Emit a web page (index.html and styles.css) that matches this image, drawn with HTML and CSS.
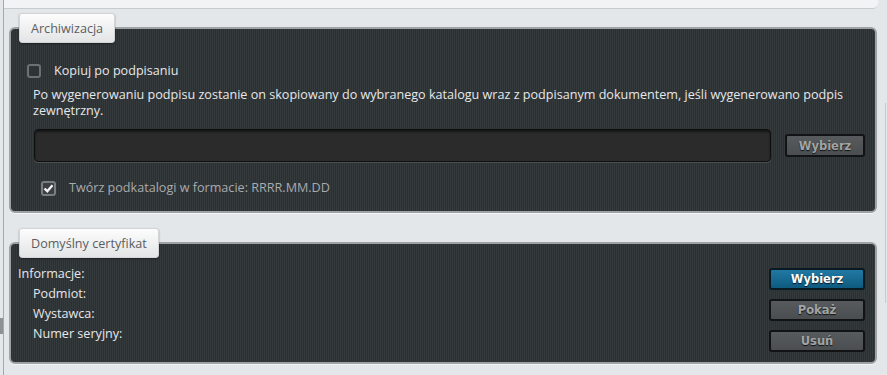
FILE: index.html
```html
<!doctype html>
<html lang="pl">
  <head>
    <meta charset="utf-8" />
    <meta name="viewport" content="width=device-width" />
    <title>Ustawienia podpisu</title>
    <link rel="stylesheet" href="styles.css">
  </head>
  <body>
    <div class="shell">
      <div class="gutter"><span class="grip"></span></div>
      <main class="page">
        <div class="prev"></div>

        <section class="group">
          <div class="tab">Archiwizacja</div>
          <div class="panel panel-archive">
            <label class="check">
              <span class="box"></span>
              Kopiuj po podpisaniu
            </label>
            <p class="note">Po wygenerowaniu podpisu zostanie on skopiowany do wybranego katalogu wraz z podpisanym dokumentem, jeśli wygenerowano podpis zewnętrzny.</p>
            <div class="path-row">
              <div class="field"></div>
              <button class="btn" type="button">Wybierz</button>
            </div>
            <label class="check check-sub">
              <span class="box box-on">
                <svg width="11" height="11" viewBox="0 0 11 11"><path d="M1.5 5.5 L4.3 8.2 L9.5 2.3" fill="none" stroke="#f2f2f2" stroke-width="2.4" /></svg>
              </span>
              Twórz podkatalogi w formacie: RRRR.MM.DD
            </label>
          </div>
        </section>

        <section class="group group-cert">
          <div class="tab">Domyślny certyfikat</div>
          <div class="panel panel-cert">
            <ul class="info">
              <li>Informacje:</li>
              <li class="sub">Podmiot:</li>
              <li class="sub">Wystawca:</li>
              <li class="sub">Numer seryjny:</li>
            </ul>
            <div class="actions">
              <button class="btn btn-primary" type="button">Wybierz</button>
              <button class="btn" type="button">Pokaż</button>
              <button class="btn" type="button">Usuń</button>
            </div>
          </div>
        </section>
      </main>
      <div class="gutter-right"><span class="rail"></span></div>
    </div>
  </body>
</html>
```

FILE: styles.css
```css
*, *::before, *::after {
  box-sizing: border-box;
}

html, body {
  margin: 0;
  padding: 0;
  height: 100%;
}

body {
  background: #e4e7e9;
  font-family: "Open Sans", "Noto Sans", sans-serif;
  font-size: 12.6px;
  color: #e6e8e9;
  overflow: hidden;
}

.shell {
  display: flex;
  height: 375px;
}

.gutter {
  width: 3px;
  display: flex;
  flex-direction: column;
}

.grip {
  display: block;
  height: 16px;
  margin-top: 318px;
  background: #8e9193;
}

.page {
  flex: 1;
  border-left: 1px solid #a6a9ab;
  padding: 0 7px 0 5px;
}

.gutter-right {
  width: 3px;
  display: flex;
  flex-direction: column;
}

.rail {
  display: block;
  width: 1px;
  height: 200px;
  margin: 103px 0 0 1px;
  background: #c9cccd;
}

.prev {
  height: 9px;
  margin: 0 -1px 0 -5px;
  background: #f2f3f4;
  border-bottom: 1px solid #c8cbcd;
  border-radius: 0 0 5px 0;
}

.group {
  margin-top: 4px;
}

.group-cert {
  margin-top: 15px;
}

.tab {
  position: relative;
  z-index: 1;
  width: fit-content;
  height: 30px;
  line-height: 29px;
  margin: 0 0 -16px 10px;
  padding: 0 11px;
  color: #5a5d5f;
  background: linear-gradient(#fdfdfd, #e3e4e5);
  border: 1px solid #d2d4d5;
  border-radius: 3px;
  box-shadow: 0 1px 2px rgba(0, 0, 0, 0.35);
}

.panel {
  border: 2px solid #9ea2a4;
  border-radius: 6px;
  background: repeating-linear-gradient(90deg, #2b3033 0 1px, #34393c 1px 2px);
  box-shadow: 0 1px 0 #f4f5f6;
}

.panel-archive {
  padding: 34px 10px 15px 22px;
}

.check {
  display: flex;
  align-items: center;
  gap: 13px;
  line-height: 16px;
  margin-left: -6px;
}

.box {
  display: flex;
  align-items: center;
  justify-content: center;
  width: 14px;
  height: 14px;
  border: 2px solid #6c7173;
  border-radius: 3px;
  background: #2e3336;
}

.box-on {
  width: 15px;
  height: 15px;
  border-color: #7a7e80;
  background: #3b3f42;
}

.note {
  margin: 8px 0 0;
  line-height: 16px;
}

.path-row {
  display: flex;
  align-items: center;
  gap: 14px;
  margin: 10px 0 0 1px;
}

.field {
  flex: 1;
  height: 33px;
  background: #2b2b2b;
  border: 1px solid #0f0f0f;
  border-radius: 4px;
  box-shadow: inset 0 2px 2px rgba(0, 0, 0, 0.5), 0 1px 0 #4a4f52;
}

.btn {
  width: 80px;
  height: 23px;
  padding: 0;
  font-family: "DejaVu Sans", sans-serif;
  font-size: 11.5px;
  font-weight: bold;
  color: #a2a4a5;
  text-shadow: 0 1px 1px #111;
  background: linear-gradient(#585b5d, #4b4e50);
  border: 2px solid #111314;
  border-radius: 3px;
}

.check-sub {
  margin: 18px 0 0 8px;
  color: #a9abac;
}

.panel-cert {
  display: flex;
  justify-content: space-between;
  padding: 20px 10px 10px 7px;
}

.info {
  list-style: none;
  margin: 0;
  padding: 0;
  line-height: 20px;
}

.info .sub {
  padding-left: 15px;
}

.actions {
  display: flex;
  flex-direction: column;
  gap: 9px;
  padding-top: 4px;
}

.actions .btn {
  width: 96px;
  height: 22px;
}

.btn-primary {
  color: #ffffff;
  text-shadow: 0 1px 1px #04121b;
  background: linear-gradient(#2179a3, #0e5a80);
  border-color: #0a1a22;
}
```
